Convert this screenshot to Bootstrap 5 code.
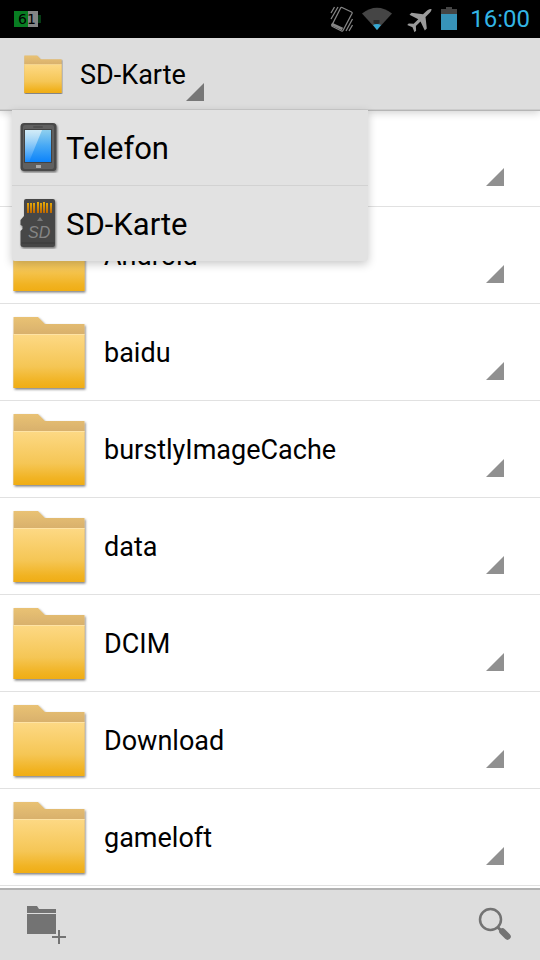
<!DOCTYPE html>
<html lang="de">
<head>
<meta charset="utf-8">
<meta name="viewport" content="width=device-width, initial-scale=1">
<title>SD-Karte</title>
<link href="https://cdn.jsdelivr.net/npm/bootstrap@5.3.0/dist/css/bootstrap.min.css" rel="stylesheet">
<style>
body { font-family: Roboto, "Noto Sans", sans-serif; color: #000; background: #fff; }
svg { display: block; flex: none; }
.status-bar { height: 38px; background: #000; padding: 0 10px 0 12px; }
.clock { font-size: 24px; line-height: 38px; color: #33b5e5; }
.app-bar { height: 72px; background: #ddd; border-bottom: 1px solid #ccc; box-shadow: 0 1px 0 #b5b5b5, 0 3px 8px rgba(0,0,0,.18); padding-top: 2px; z-index: 2; }
.place-btn, .place-btn:hover, .place-item, .place-item:hover { color: #000; }
.place-btn { padding: 2px 0 0 16px; font-size: 27px; }
.place-btn .corner { margin-top: 32px; }
.place-menu { position: absolute; left: 12px; top: 72px; width: 66%; background: #e2e2e2; border-radius: 0 0 3px 3px; box-shadow: 0 3px 10px rgba(0,0,0,.22); }
.place-item { height: 75px; padding: 0 7px; font-size: 31px; gap: 7px; }
.place-item svg { margin-bottom: 2px; }
.place-item span { padding-top: 4px; }
.place-item + .place-item { height: 76px; border-top: 1px solid #d2d2d2 !important; }
.file-row { height: 97px; padding: 2px 36px 0 10px; border-bottom: 1px solid #e1e1e1; }
.file-name { font-size: 27px; line-height: 36px; padding-left: 16px; }
.file-row .corner { margin-top: 36px; }
.tool-bar { height: 72px; background: #ddd; border-top: 2px solid #b2b2b2; padding: 0 25px 2px 24px; }
</style>
</head>
<body>
<svg width="0" height="0" class="position-absolute" aria-hidden="true">
  <defs>
    <linearGradient id="front" x1="0" y1="0" x2="0" y2="1"><stop offset="0" stop-color="#fdd985"/><stop offset=".6" stop-color="#f5c655"/><stop offset=".88" stop-color="#f1b322"/><stop offset="1" stop-color="#f0ad14"/></linearGradient>
    <linearGradient id="back" x1="0" y1="0" x2="0" y2=".25"><stop offset="0" stop-color="#e9c274"/><stop offset="1" stop-color="#d8b06c"/></linearGradient>
    <linearGradient id="screen" x1="0" y1="0" x2="0" y2="1"><stop offset="0" stop-color="#8fd0ee"/><stop offset=".5" stop-color="#45a8f5"/><stop offset="1" stop-color="#0c83fb"/></linearGradient>
    <linearGradient id="glare" x1="0" y1="0" x2="0" y2="1"><stop offset="0" stop-color="#fff" stop-opacity=".6"/><stop offset="1" stop-color="#fff" stop-opacity=".05"/></linearGradient>
    <linearGradient id="pins" x1="0" y1="0" x2="0" y2="1"><stop offset="0" stop-color="#e8ae08"/><stop offset="1" stop-color="#bd6500"/></linearGradient>
    <filter id="soft" x="-10%" y="-10%" width="120%" height="120%"><feDropShadow dx="1" dy="1.5" stdDeviation="1" flood-color="#000" flood-opacity=".5"/></filter>
    <symbol id="folder" viewBox="0 0 78 78">
      <g filter="url(#soft)"><path d="M3.500 3h24.500l7 7h39.500v64h-71z" fill="url(#back)"/></g>
      <path d="M3.500 20h71v54h-71z" fill="url(#front)"/>
      <path d="M3.500 20h71v1h-71z" fill="#fee3a4"/>
    </symbol>
    <symbol id="corner" viewBox="0 0 18 18"><path d="M18 0v18H0z" fill="currentColor"/></symbol>
  </defs>
</svg>

<div class="d-flex flex-column vh-100 overflow-hidden">
  <div class="status-bar d-flex align-items-center justify-content-between flex-shrink-0">
    <svg width="32" height="20" viewBox="0 0 32 20" role="img" aria-label="61">
      <rect x="2" y="2" width="14" height="16" fill="#087d22"/><rect x="16" y="2" width="10" height="16" fill="#858585"/><rect x="26" y="6" width="3" height="8" fill="#063c14"/>
      <text x="6" y="15" font-family="DejaVu Sans" font-size="14" fill="#000">61</text>
    </svg>
    <div class="d-flex align-items-center">
      <svg width="141" height="38" viewBox="0 0 141 38" aria-hidden="true">
        <g fill="none" stroke="#858585" stroke-width="1.3">
          <path d="M13 7.500 22.500 12q1 .5.500 1.500L14 30.500q-.5 1-1.500.5L3.500 26.500q-1-.5-.5-1.500L11.500 8.200q.5-1 1.500-.7z"/>
          <path d="M2.500 24 13.500 29" stroke-width="3"/>
          <path d="M9 7 2 19M5.500 7 2 13M23.500 19 17 31M23.500 25 20 31"/>
        </g>
        <path d="M33 13.500Q48 2 63 13.500L48 30z" fill="#454545"/>
        <path d="M44.500 20h6v3l-3 2-3-2z" fill="#292929"/>
        <path d="M44 25q4-2 8 0l-4 5z" fill="#35a8d3"/>
        <path d="M102.500 9c-2-.4-3.700.7-5.500 2.500l-3 2.800-11.500-1.600-2 2 8.800 4.600-4.600 4.500-5-.3-1.500 1.600 5.300 2.100 2 5 1.600-1.500-.2-4.600 4.600-4.500 4.300 8.800 2-2-1.300-11.500 3-3c1.900-1.800 3.200-3 3-4.900z" fill="#9b9b9b"/>
        <path d="M117 7h6v2h5v6h-16V9h5z" fill="#454545"/><path d="M112 14h16v16h-16z" fill="#3793b9"/>
      </svg>
      <span class="clock">16:00</span>
    </div>
  </div>

  <header class="app-bar position-relative d-flex align-items-center flex-shrink-0 ps-4">
    <svg width="40" height="40" viewBox="3 2 76 76" aria-hidden="true"><use href="#folder" width="78" height="78"/></svg>
    <button type="button" class="place-btn btn border-0 rounded-0 d-flex align-items-center" aria-haspopup="true" aria-expanded="true" aria-controls="places">SD-Karte
      <svg class="corner" width="18" height="18" color="#777" aria-hidden="true"><use href="#corner"/></svg>
    </button>
    <div class="place-menu" id="places">
      <button type="button" class="place-item btn border-0 rounded-0 w-100 d-flex align-items-center text-start">
        <svg width="40" height="52" viewBox="0 0 40 52" aria-hidden="true">
          <g filter="url(#soft)"><rect x="1.500" y="2" width="36" height="48" rx="3.500" fill="#494949"/></g>
          <rect x="4" y="4" width="31" height="44" rx="2" fill="#606060"/>
          <rect x="14" y="5" width="10" height="2" rx="1" fill="#505050"/>
          <rect x="5" y="8" width="28" height="34" fill="#424242"/><rect x="6" y="9" width="26" height="32" fill="url(#screen)"/>
          <path d="M6 9h17L10 41H6z" fill="url(#glare)"/><rect x="17" y="44" width="5" height="3" fill="#aaa"/>
        </svg>
        <span>Telefon</span>
      </button>
      <button type="button" class="place-item btn border-0 rounded-0 w-100 d-flex align-items-center text-start">
        <svg width="40" height="52" viewBox="0 0 40 52" aria-hidden="true">
          <g filter="url(#soft)"><path d="M7 2h27q2 0 2 2v44q0 2-2 2H4q-2.500 0-2.500-2V34l2-2v-3l-2-1v-5L5 19V4q0-2 2-2z" fill="#474747"/></g>
          <path d="M2.500 46h33" stroke="#3a3a3a"/>
          <path d="M8 6h2v10H8zM11 6h2v10h-2zM14 6h2v10h-2zM18 5h2v11h-2zM21 6h2v10h-2zM24 5h2v11h-2zM27 6h2v10h-2zM31 6h2v10h-2z" fill="url(#pins)"/>
          <path d="m21 20 3 4h-6z" fill="#777"/>
          <text x="9" y="41" font-family="Liberation Sans" font-style="italic" font-size="16" fill="#858585">SD</text>
        </svg>
        <span>SD-Karte</span>
      </button>
    </div>
  </header>

  <main class="flex-fill overflow-hidden">
    <ul class="list-unstyled m-0">
      <li class="file-row d-flex align-items-center"><svg width="78" height="78" aria-hidden="true"><use href="#folder"/></svg><svg class="corner ms-auto" width="18" height="18" color="#909090" aria-hidden="true"><use href="#corner"/></svg></li>
      <li class="file-row d-flex align-items-center"><svg width="78" height="78" aria-hidden="true"><use href="#folder"/></svg><span class="file-name">Android</span><svg class="corner ms-auto" width="18" height="18" color="#909090" aria-hidden="true"><use href="#corner"/></svg></li>
      <li class="file-row d-flex align-items-center"><svg width="78" height="78" aria-hidden="true"><use href="#folder"/></svg><span class="file-name">baidu</span><svg class="corner ms-auto" width="18" height="18" color="#909090" aria-hidden="true"><use href="#corner"/></svg></li>
      <li class="file-row d-flex align-items-center"><svg width="78" height="78" aria-hidden="true"><use href="#folder"/></svg><span class="file-name">burstlyImageCache</span><svg class="corner ms-auto" width="18" height="18" color="#909090" aria-hidden="true"><use href="#corner"/></svg></li>
      <li class="file-row d-flex align-items-center"><svg width="78" height="78" aria-hidden="true"><use href="#folder"/></svg><span class="file-name">data</span><svg class="corner ms-auto" width="18" height="18" color="#909090" aria-hidden="true"><use href="#corner"/></svg></li>
      <li class="file-row d-flex align-items-center"><svg width="78" height="78" aria-hidden="true"><use href="#folder"/></svg><span class="file-name">DCIM</span><svg class="corner ms-auto" width="18" height="18" color="#909090" aria-hidden="true"><use href="#corner"/></svg></li>
      <li class="file-row d-flex align-items-center"><svg width="78" height="78" aria-hidden="true"><use href="#folder"/></svg><span class="file-name">Download</span><svg class="corner ms-auto" width="18" height="18" color="#909090" aria-hidden="true"><use href="#corner"/></svg></li>
      <li class="file-row d-flex align-items-center"><svg width="78" height="78" aria-hidden="true"><use href="#folder"/></svg><span class="file-name">gameloft</span><svg class="corner ms-auto" width="18" height="18" color="#909090" aria-hidden="true"><use href="#corner"/></svg></li>
    </ul>
  </main>

  <footer class="tool-bar d-flex align-items-center justify-content-between flex-shrink-0">
    <button type="button" class="btn p-0 border-0 rounded-0" aria-label="Neuer Ordner">
      <svg width="44" height="44" viewBox="0 0 44 44" fill="#737373" aria-hidden="true"><path d="M3 4h10l2 3h17v4H3zM3 12h29v20H3zM34 28h2v6h6v2h-6v6h-2v-6h-6v-2h6z"/></svg>
    </button>
    <button type="button" class="btn p-0 border-0 rounded-0" aria-label="Suchen">
      <svg width="40" height="40" viewBox="0 0 40 40" fill="none" stroke="#737373" aria-hidden="true"><circle cx="15.500" cy="15.500" r="10.500" stroke-width="2.500"/><path d="m22.500 23 4 4" stroke-width="3"/><path d="m27.500 27.500 5 5" stroke-width="6.500" stroke-linecap="round"/></svg>
    </button>
  </footer>
</div>
<script src="https://cdn.jsdelivr.net/npm/bootstrap@5.3.0/dist/js/bootstrap.bundle.min.js"></script>
</body>
</html>
